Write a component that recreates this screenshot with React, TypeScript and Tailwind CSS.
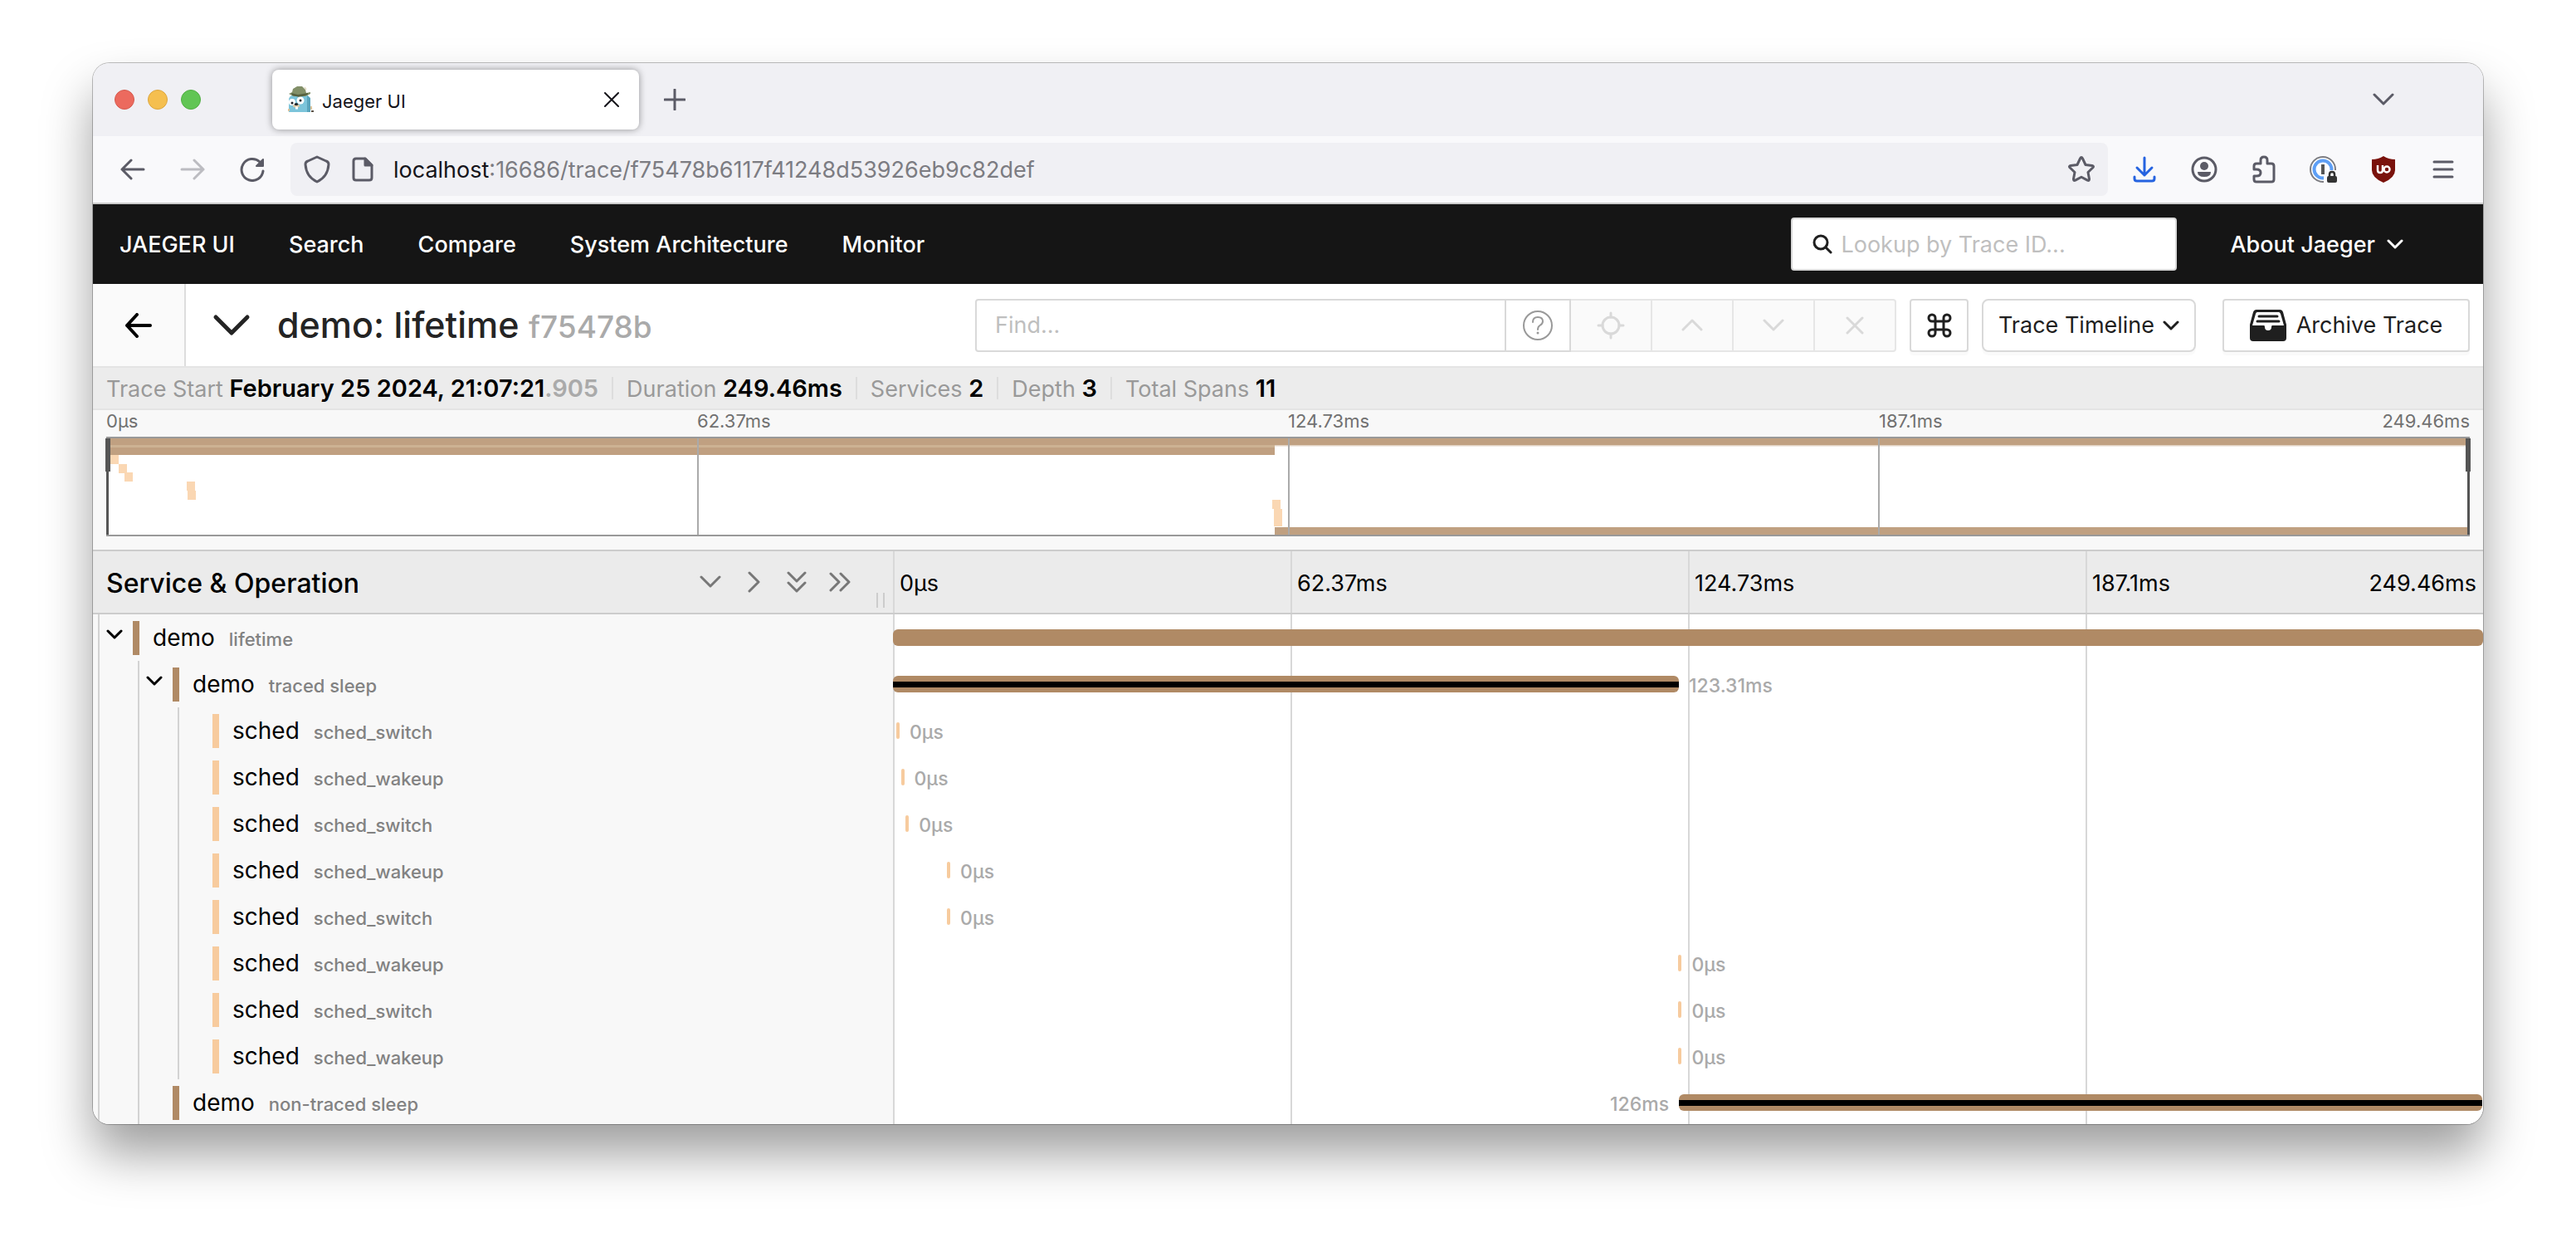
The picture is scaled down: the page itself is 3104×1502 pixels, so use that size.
import type { ReactNode } from "react";

type IconProps = {
  w: number;
  h: number;
  d?: string;
  sw?: number;
  className?: string;
  children?: ReactNode;
};

function Icon({ w, h, d, sw = 3, className = "", children }: IconProps) {
  return (
    <svg
      width={w}
      height={h}
      viewBox={`0 0 ${w} ${h}`}
      fill="none"
      stroke="currentColor"
      strokeWidth={sw}
      strokeLinecap="round"
      strokeLinejoin="round"
      className={`shrink-0 ${className}`}
      aria-hidden="true"
    >
      {d && <path d={d} />}
      {children}
    </svg>
  );
}

const SmallChevron = ({ className = "" }: { className?: string }) => (
  <Icon w={20} h={12} sw={3} d="M2 2l8 8 8-8" className={className} />
);

function Favicon() {
  return (
    <svg width="32" height="32" viewBox="0 0 32 32" className="shrink-0" aria-hidden="true">
      <path d="M2 31V16c0-4 4-6 10-6h9c5 0 7 4 7 8v13z" fill="#7cc4da" />
      <path d="M24 11l4 3v17h-4z" fill="#5aa5bd" />
      <path d="M2 9l4-2 1-4 5-3h6l4 4 1 4 5-1v2l-6 3H8z" fill="#828f68" />
      <path d="M5 8l8 2 12-2v2l-10 3-9-2z" fill="#56613f" />
      <circle cx="6" cy="19" r="4" fill="#fff" />
      <circle cx="16" cy="17" r="4.500" fill="#fff" />
      <circle cx="6" cy="20" r="1.500" fill="#20242a" />
      <circle cx="16" cy="17" r="1.500" fill="#20242a" />
      <ellipse cx="11" cy="23.500" rx="4" ry="2" fill="#d9c7a5" />
      <ellipse cx="11" cy="21.500" rx="2.200" ry="1.500" fill="#20242a" />
      <path d="M10 24.500h3v3h-3z" fill="#fff" />
      <path d="M1 27h2v3H1zM28 24h2v4h-2z" fill="#dcc49c" />
      <path d="M21 1l2 3" stroke="#e4dcc4" strokeWidth="1.500" />
      <path d="M29 29h3v2h-3z" fill="#5d5347" />
    </svg>
  );
}

function TabStrip() {
  return (
    <div className="flex h-22 items-center bg-[#f0f0f4] pl-[26px] text-[#5b5b66]">
      <div className="flex gap-4">
        <button aria-label="Close window" className="size-6 rounded-full border border-[#d55a4e] bg-[#ec6a5e]" />
        <button aria-label="Minimize window" className="size-6 rounded-full border border-[#dca63f] bg-[#f5bf4f]" />
        <button aria-label="Zoom window" className="size-6 rounded-full border border-[#51ae43] bg-[#61c554]" />
      </div>
      <div className="ml-[86px] flex h-18 w-[442px] items-center rounded-lg bg-white pr-6 pl-[18px] text-[22px] text-[#15141a] shadow-[0_0_8px_rgba(0,0,0,0.4)]">
        <Favicon />
        <span className="ml-2.5 flex-1 pt-1">Jaeger UI</span>
        <button aria-label="Close tab">
          <Icon w={18} h={18} sw={2} d="M1 1l16 16M17 1L1 17" />
        </button>
      </div>
      <button aria-label="New tab" className="ml-[30px]">
        <Icon w={26} h={26} sw={3} d="M13 1v24M1 13h24" />
      </button>
      <button aria-label="List all tabs" className="mr-[107px] ml-auto">
        <Icon w={26} h={16} sw={3} d="M2 2l11 11L24 2" />
      </button>
    </div>
  );
}

function ToolButton({ label, children, className = "" }: { label: string; children: ReactNode; className?: string }) {
  return (
    <button aria-label={label} className={`flex w-18 shrink-0 items-center justify-center ${className}`}>
      {children}
    </button>
  );
}

function AddressBar() {
  return (
    <div className="flex h-[82px] items-center border-b-2 border-[#cccccc] bg-[#f9f9fb] px-3 text-[#5b5b66]">
      <ToolButton label="Back">
        <Icon w={30} h={26} sw={3} d="M28 13H2M13 2L2 13l11 11" />
      </ToolButton>
      <ToolButton label="Forward" className="text-[#bcbcc1]">
        <Icon w={30} h={26} sw={3} d="M2 13h26M17 2l11 11-11 11" />
      </ToolButton>
      <ToolButton label="Reload">
        <Icon w={30} h={30} sw={3} d="M28 17a13 13 0 1 1-4-11">
          <path d="M28 3v8h-8z" fill="currentColor" strokeWidth={2} />
        </Icon>
      </ToolButton>
      <div className="ml-2.5 flex h-16 flex-1 items-center rounded-lg bg-[#f0f0f4] px-4">
        <button aria-label="Tracking protection">
          <Icon w={32} h={34} sw={3} d="M16 2l11 5q3 1 3 4-1 15-14 21Q3 26 2 11q0-3 3-4z" />
        </button>
        <button aria-label="Site information" className="ml-[26px]">
          <Icon w={26} h={30} sw={3} d="M5 2h11l8 8v15q0 3-3 3H5q-3 0-3-3V5q0-3 3-3z">
            <path d="M16 2v8h8z" fill="currentColor" />
          </Icon>
        </button>
        <label htmlFor="url" className="ml-6 pt-0.5 text-[27px] text-[#15141a]">
          localhost
        </label>
        <input
          id="url"
          readOnly
          value=":16686/trace/f75478b6117f41248d53926eb9c82def"
          className="min-w-0 flex-1 bg-transparent pt-0.5 text-[27px] text-[#7c7c82] outline-none"
        />
        <button aria-label="Bookmark this page">
          <Icon
            w={32}
            h={32}
            sw={3}
            d="M14.500 3q1.500-3 3 0l3.500 7.500 8 1q2.500 .6.700 2.500L24 19.500l1.500 8q.2 2.600-2.200 1.600L16 25.200l-7.300 3.900q-2.400 1-2.200-1.600l1.500-8L2.300 14q-1.800-1.900.7-2.500l8-1z"
          />
        </button>
      </div>
      <div className="ml-2 flex">
        <ToolButton label="Downloads" className="text-[#2563e0]">
          <Icon w={30} h={32} sw={3} d="M15 2v21M6 14l9 9 9-9M3 25v2q0 3 3 3h18q3 0 3-3v-2" />
        </ToolButton>
        <ToolButton label="Account">
          <Icon w={32} h={32} sw={3}>
            <circle cx="16" cy="16" r="14" />
            <circle cx="16" cy="12" r="5" fill="currentColor" stroke="none" />
            <path d="M8 19h16q0 6-8 6t-8-6z" fill="currentColor" stroke="none" />
          </Icon>
        </ToolButton>
        <ToolButton label="Extensions">
          <Icon
            w={28}
            h={34}
            sw={3}
            d="M2 13q0-3 3-3h5V6q0-4 4-4t4 4v4h5q3 0 3 3v16q0 3-3 3H5q-3 0-3-3v-4h3q5 0 5-4t-5-4H2z"
          />
        </ToolButton>
        <ToolButton label="Password manager">
          <svg width="34" height="34" viewBox="0 0 34 34" fill="none" aria-hidden="true">
            <circle cx="16" cy="17" r="15" stroke="#7d7d82" strokeWidth="2" fill="#fff" />
            <circle cx="16" cy="17" r="10.500" stroke="#5e9ff5" strokeWidth="4" />
            <path d="M17 18h17v16H17z" fill="#f9f9fb" />
            <path d="M14 11h4v12h-4z" fill="#555" />
            <rect x="21" y="25" width="12" height="8" rx="2" fill="#333" />
            <path d="M24 26v-3q0-3 3-3t3 3v3" stroke="#333" strokeWidth="2.500" />
          </svg>
        </ToolButton>
        <ToolButton label="uBlock Origin">
          <svg width="30" height="34" viewBox="0 0 30 34" fill="none" aria-hidden="true">
            <path d="M15 1q6 4 14 4v13q0 9-14 15Q1 27 1 18V5q8 0 14-4z" fill="#7a120c" />
            <path d="M8 12v6q0 3 3 3t3-3v-6" stroke="#fff" strokeWidth="2.500" />
            <circle cx="19" cy="17" r="3.500" stroke="#fff" strokeWidth="2.500" />
          </svg>
        </ToolButton>
        <ToolButton label="Open menu">
          <Icon w={26} h={22} sw={3} d="M2 2h22M2 11h22M2 20h22" />
        </ToolButton>
      </div>
    </div>
  );
}

const links = ["JAEGER UI", "Search", "Compare", "System Architecture", "Monitor"];

function SiteNav() {
  return (
    <nav className="flex h-24 items-center bg-[#151515] px-8 text-[27px] text-white">
      <div className="flex flex-1 gap-[65px] pt-0.5 font-medium">
        {links.map((l) => (
          <a key={l} href="#" className="whitespace-nowrap">
            {l}
          </a>
        ))}
      </div>
      <label className="flex h-16 w-[465px] items-center gap-2.5 rounded-sm border-2 border-[#d9d9d9] bg-white pl-6 text-[#1f1f1f]">
        <Icon w={24} h={24} sw={3} d="M16 16l6 6">
          <circle cx="10" cy="10" r="8" />
        </Icon>
        <input
          aria-label="Lookup by Trace ID"
          placeholder="Lookup by Trace ID..."
          className="min-w-0 flex-1 bg-transparent pt-0.5 outline-none placeholder:text-[#bfbfbf]"
        />
      </label>
      <button className="mr-16 ml-16 flex items-center gap-3.5 font-medium">
        <span className="pt-0.5">About Jaeger</span>
        <SmallChevron />
      </button>
    </nav>
  );
}

const disabledTool =
  "flex w-[98px] items-center justify-center border-y-2 border-r-2 border-[#e6e6e6] bg-[#fafafa] text-[#d9d9d9]";
const outlined =
  "flex h-16 items-center border-2 border-[#d9d9d9] bg-white text-[27px] text-[#1f1f1f] shadow-[0_4px_0_rgba(0,0,0,0.02)]";

function TraceHeader() {
  return (
    <header className="flex h-[101px] items-center border-b-2 border-[#e4e4e4] bg-white pr-4">
      <a
        href="#"
        aria-label="Back"
        className="flex w-28 items-center justify-center self-stretch border-r-2 border-[#dddddd] bg-[#fafafa] text-black"
      >
        <Icon w={34} h={30} sw={4} d="M31 15H3M15 2L3 15l12 13" />
      </a>
      <button aria-label="Collapse summary" className="ml-8 text-[#242424]">
        <Icon w={46} h={28} sw={5} d="M4 4l19 19L42 4" />
      </button>
      <h1 className="ml-8 flex-1 text-[43px] font-medium whitespace-nowrap text-[#242424]">
        demo: lifetime <span className="text-[37px] text-[#aaaaaa]">f75478b</span>
      </h1>
      <div className="flex h-16">
        <input
          aria-label="Find"
          placeholder="Find..."
          className="w-[640px] rounded-l-sm border-2 border-[#d9d9d9] bg-white pt-0.5 pl-[22px] text-[27px] outline-none placeholder:text-[#bfbfbf]"
        />
        <button
          aria-label="Help"
          className="flex w-[78px] items-center justify-center border-y-2 border-r-2 border-[#d9d9d9] text-[#999999]"
        >
          <Icon w={38} h={38} sw={2} d="M13 15q0-6 6-6t6 5q0 3-3.500 5-2.500 1.500-2.500 5">
            <circle cx="19" cy="19" r="17" />
            <circle cx="19" cy="28" r="1.500" fill="currentColor" stroke="none" />
          </Icon>
        </button>
        <button disabled aria-label="Locate" className={disabledTool}>
          <Icon w={34} h={34} sw={3} d="M17 2v5M17 27v5M2 17h5M27 17h5">
            <circle cx="17" cy="17" r="10" />
          </Icon>
        </button>
        <button disabled aria-label="Previous match" className={disabledTool}>
          <Icon w={26} h={16} sw={3} d="M2 13L13 2l11 11" />
        </button>
        <button disabled aria-label="Next match" className={disabledTool}>
          <Icon w={26} h={16} sw={3} d="M2 2l11 11L24 2" />
        </button>
        <button disabled aria-label="Clear search" className={`${disabledTool} rounded-r-sm`}>
          <Icon w={22} h={22} sw={3} d="M2 2l18 18M20 2L2 20" />
        </button>
      </div>
      <button aria-label="Keyboard shortcuts" className={`${outlined} ml-4 w-[71px] justify-center rounded-sm`}>
        <Icon
          w={32}
          h={32}
          sw={3}
          d="M11 11V7a4 4 0 1 0-4 4h18a4 4 0 1 0-4-4v18a4 4 0 1 0 4-4H7a4 4 0 1 0 4 4z"
        />
      </button>
      <button className={`${outlined} ml-4 w-[258px] justify-center gap-2.5 rounded-lg`}>
        <span className="pt-0.5">Trace Timeline</span>
        <SmallChevron />
      </button>
      <button className={`${outlined} ml-8 w-[298px] justify-center gap-3 rounded-sm`}>
        <svg width="44" height="40" viewBox="0 0 44 40" className="shrink-0" aria-hidden="true">
          <path d="M8 1h28q3 0 4 3l4 15v16q0 4-4 4H4q-4 0-4-4V19L4 4q1-3 4-3z" fill="#1f1f1f" />
          <path d="M9 4h26q1 0 2 2l4 14H27q-1 0-1 2 0 4-4 4t-4-4q0-2-1-2H3L7 6q.500-2 2-2z" fill="#fff" />
          <path d="M11 9h22M9 15h26" stroke="#1f1f1f" strokeWidth="3" strokeLinecap="round" />
        </svg>
        <span className="pt-0.5">Archive Trace</span>
      </button>
    </header>
  );
}

const summary = [
  { label: "Trace Start", value: "February 25 2024, 21:07:21", faint: ".905" },
  { label: "Duration", value: "249.46ms" },
  { label: "Services", value: "2" },
  { label: "Depth", value: "3" },
  { label: "Total Spans", value: "11" },
];

function Summary() {
  return (
    <ul className="flex h-[51px] items-center border-b-2 border-[#e4e4e4] bg-[#ececec] pl-4 text-[27px] leading-6">
      {summary.map((s, i) => (
        <li key={s.label} className={i ? "border-l-2 border-[#dddddd] px-4 pt-0.5" : "pt-0.5 pr-4"}>
          <span className="text-[#999999]">{s.label} </span>
          <strong className="text-[29px] font-semibold text-black">{s.value}</strong>
          {s.faint && <strong className="text-[29px] font-semibold text-[#aaaaaa]">{s.faint}</strong>}
        </li>
      ))}
    </ul>
  );
}

const ticks = ["0μs", "62.37ms", "124.73ms", "187.1ms"];
const brown = "#c0a081";
const peach = "#fad7b3";
const overview: [number, number, number, number, string][] = [
  [0, 0, 2848, 8, brown],
  [0, 11, 1408, 9, brown],
  [5, 20, 10, 11, peach],
  [15, 31, 10, 11, peach],
  [22, 41, 10, 11, peach],
  [97, 52, 10, 11, peach],
  [98, 63, 10, 11, peach],
  [1405, 74, 10, 11, peach],
  [1407, 85, 10, 21, peach],
  [1408, 107, 1440, 9, brown],
];

function Overview() {
  return (
    <section className="bg-[#f8f8f8] px-4 pb-4">
      <div className="grid h-8 grid-cols-4 text-[22px] leading-[26px] text-[#717171]">
        {ticks.map((t, i) => (
          <div key={t} className="flex justify-between">
            <span>{t}</span>
            {i === 3 && <span>249.46ms</span>}
          </div>
        ))}
      </div>
      <div className="border-y-2 border-[#999999] bg-white">
        <svg className="block h-[116px] w-full overflow-visible" viewBox="0 0 2848 116" preserveAspectRatio="none">
          <path d="M0 8h1408v3H0z" fill="#cdb293" />
          <path d="M1408 8h1440v1.500H1408z" fill="#e2d2c1" />
          {overview.map(([x, y, w, h, c]) => (
            <rect key={`${x}-${y}`} x={x} y={y} width={w} height={h} fill={c} />
          ))}
          <path d="M713 0v116M1425 0v116M2136 0v116" stroke="#aaaaaa" strokeWidth="2" />
          <path d="M0 0h3v116H0zM2845 0h3v116h-3z" fill="#555555" />
          <path d="M-1 0h6v40h-6zM2843 0h6v40h-6z" fill="#555555" />
        </svg>
      </div>
    </section>
  );
}

function TimelineHeader() {
  return (
    <div className="flex h-[78px] border-y-2 border-[#cccccc] bg-[#ebebeb]">
      <div className="flex w-[33.47%] shrink-0 items-center pl-4">
        <h2 className="flex-1 pt-1 text-[32px] font-medium text-black">Service &amp; Operation</h2>
        <div className="flex items-center text-[#777777]">
          <button aria-label="Collapse one level" className="flex w-13 justify-center">
            <Icon w={26} h={16} sw={3} d="M2 2l11 11L24 2" />
          </button>
          <button aria-label="Expand one level" className="flex w-13 justify-center">
            <Icon w={16} h={26} sw={3} d="M3 2l11 11L3 24" />
          </button>
          <button aria-label="Collapse all" className="flex w-13 justify-center">
            <Icon w={24} h={26} sw={3} d="M2 2l10 10L22 2M2 14l10 10 10-10" />
          </button>
          <button aria-label="Expand all" className="flex w-13 justify-center">
            <Icon w={26} h={24} sw={3} d="M2 2l10 10L2 22M14 2l10 10-10 10" />
          </button>
        </div>
        <div className="mr-2.5 mb-1.5 ml-[18px] h-[18px] w-2.5 self-end border-x-2 border-[#cccccc]" />
      </div>
      <div className="grid flex-1 grid-cols-4 text-[27px] text-black">
        {ticks.map((t, i) => (
          <div key={t} className="flex items-center justify-between border-l-2 border-[#d8d8d8] pt-1 pr-2 pl-1.5">
            <span>{t}</span>
            {i === 3 && <span>249.46ms</span>}
          </div>
        ))}
      </div>
    </div>
  );
}

type Span = {
  service: "demo" | "sched";
  op: string;
  depth: number;
  open?: boolean;
  start: number;
  width?: number;
  label?: string;
  critical?: boolean;
};

const spans: Span[] = [
  { service: "demo", op: "lifetime", depth: 1, open: true, start: 0, width: 100 },
  { service: "demo", op: "traced sleep", depth: 2, open: true, start: 0, width: 49.43, label: "123.31ms", critical: true },
  { service: "sched", op: "sched_switch", depth: 3, start: 0.21, label: "0μs" },
  { service: "sched", op: "sched_wakeup", depth: 3, start: 0.5, label: "0μs" },
  { service: "sched", op: "sched_switch", depth: 3, start: 0.8, label: "0μs" },
  { service: "sched", op: "sched_wakeup", depth: 3, start: 3.4, label: "0μs" },
  { service: "sched", op: "sched_switch", depth: 3, start: 3.4, label: "0μs" },
  { service: "sched", op: "sched_wakeup", depth: 3, start: 49.4, label: "0μs" },
  { service: "sched", op: "sched_switch", depth: 3, start: 49.4, label: "0μs" },
  { service: "sched", op: "sched_wakeup", depth: 3, start: 49.4, label: "0μs" },
  { service: "demo", op: "non-traced sleep", depth: 2, start: 49.43, width: 50.5, label: "126ms", critical: true },
];

function SpanRow({ s }: { s: Span }) {
  const labelFirst = s.start > 40 && s.width !== undefined;
  const label = s.label && <span className="text-[23px] font-medium text-[#aaaaaa]">{s.label}</span>;
  return (
    <div className="flex h-14">
      <div className="flex w-[33.47%] shrink-0 bg-[#f8f8f8]">
        {Array.from({ length: s.depth }, (_, i) => (
          <div key={i} className="flex w-12 pl-1.5">
            <div className="border-l-2 border-[#d3d3d3]" />
            {s.open && i === s.depth - 1 && (
              <button aria-label={`Toggle ${s.op}`} className="ml-2 self-start pt-[18px] text-black">
                <SmallChevron />
              </button>
            )}
          </div>
        ))}
        <div className={`mt-2 h-[41px] w-2 ${s.service === "demo" ? "bg-[#b08a65]" : "bg-[#f7cb9e]"}`} />
        <a href="#" className="flex items-center pl-4 text-[28px] text-black">
          <span>
            {s.service}
            <small className="ml-[17px] text-[22px] font-medium text-[#828282]">{s.op}</small>
          </span>
        </a>
      </div>
      <div className="grid flex-1 bg-white">
        <div className="grid grid-cols-4 [grid-area:1/1]">
          {ticks.map((t) => (
            <div key={t} className="border-l-2 border-[#d8d8d8]" />
          ))}
        </div>
        <div className="flex min-w-0 items-center [grid-area:1/1]">
          <div className="flex shrink-0 justify-end" style={{ width: `${s.start}%` }}>
            {labelFirst && <div className="pt-1 pr-3">{label}</div>}
          </div>
          {s.width !== undefined ? (
            <div
              className={`flex h-5 shrink-0 items-center rounded-md ${s.service === "demo" ? "bg-[#b08a65]" : "bg-[#f7cb9e]"}`}
              style={{ width: `${s.width}%` }}
            >
              {s.critical && <div className="h-[7px] w-full bg-black" />}
            </div>
          ) : (
            <div className="h-5 w-1 shrink-0 rounded-xs bg-[#f7cb9e]" />
          )}
          {!labelFirst && <div className="ml-3 pt-1">{label}</div>}
        </div>
      </div>
    </div>
  );
}

export default function App() {
  return (
    <div className="bg-white px-28 pt-19 pb-37 font-['Inter',sans-serif]">
      <main className="overflow-hidden rounded-[20px] shadow-[0_0_0_1px_rgba(0,0,0,0.25),0_36px_60px_rgba(0,0,0,0.38)]">
        <TabStrip />
        <AddressBar />
        <SiteNav />
        <TraceHeader />
        <Summary />
        <Overview />
        <TimelineHeader />
        <div className="-mb-0.5">
          {spans.map((s, i) => (
            <SpanRow key={i} s={s} />
          ))}
        </div>
      </main>
    </div>
  );
}
